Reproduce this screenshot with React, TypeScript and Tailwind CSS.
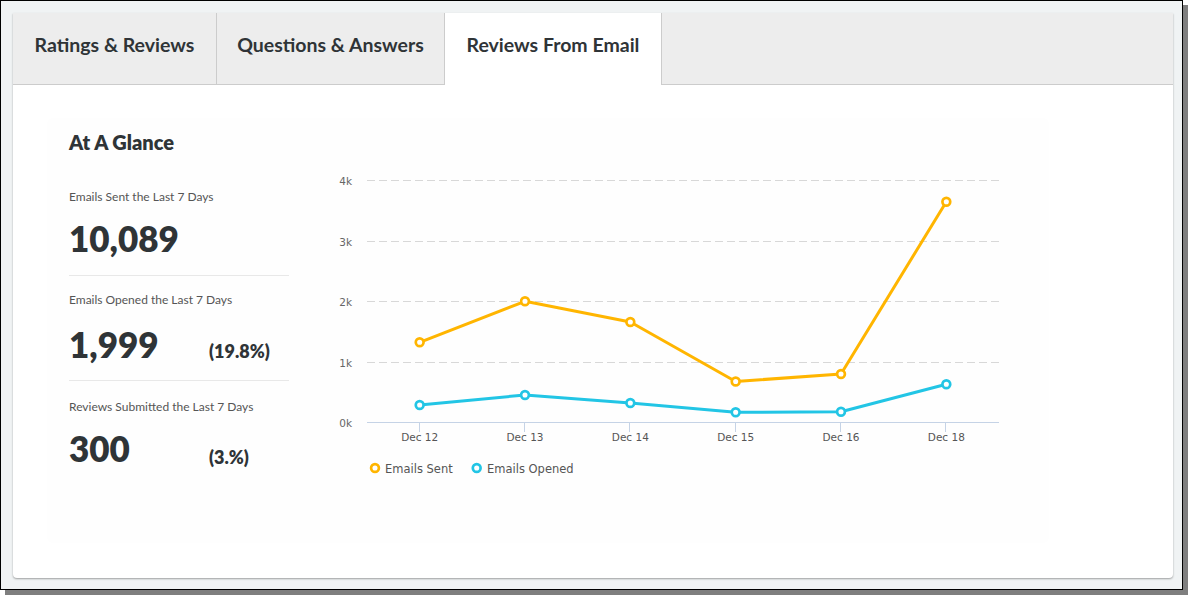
import React from "react";

const X0 = 37;
const STEP = 632 / 6;
const cats = ["Dec 12", "Dec 13", "Dec 14", "Dec 15", "Dec 16", "Dec 18"];
const sent = [177.3, 136.3, 157, 216.5, 209, 36.7];
const opened = [240, 230, 238, 247.3, 246.7, 219.3];
const cx = (i: number) => X0 + STEP / 2 + i * STEP;

function Chart() {
  const grid = [
    { y: 15.5, l: "4k" },
    { y: 76.5, l: "3k" },
    { y: 136.5, l: "2k" },
    { y: 197.5, l: "1k" },
  ];
  const pts = (arr: number[]) => arr.map((y, i) => `${cx(i)},${y}`).join(" ");
  const font = { fontFamily: '"DejaVu Sans", sans-serif' };
  return (
    <svg width="680" height="320" viewBox="0 0 680 320" style={font}>
      {grid.map((g) => (
        <g key={g.l}>
          <line x1={X0} x2={669} y1={g.y} y2={g.y} stroke="#d8d8d8" strokeWidth="1" strokeDasharray="8 4" />
          <text x={22} y={g.y + 4} textAnchor="end" fontSize="10.5" fill="#666">{g.l}</text>
        </g>
      ))}
      <text x={22} y={261.5} textAnchor="end" fontSize="10.5" fill="#666">0k</text>
      <line x1={X0} x2={669} y1={257.5} y2={257.5} stroke="#c5d3e6" strokeWidth="1" />
      {cats.map((c, i) => (
        <g key={c}>
          <line x1={Math.round(cx(i)) - 0.5} x2={Math.round(cx(i)) - 0.5} y1={257.5} y2={267} stroke="#c5d3e6" strokeWidth="1" />
          <text x={cx(i)} y={276} textAnchor="middle" fontSize="10.5" fill="#555">{c}</text>
        </g>
      ))}
      <polyline points={pts(sent)} fill="none" stroke="#ffb500" strokeWidth="3" strokeLinejoin="round" />
      <polyline points={pts(opened)} fill="none" stroke="#22c5e5" strokeWidth="3" strokeLinejoin="round" />
      {sent.map((y, i) => (
        <circle key={"s" + i} cx={cx(i)} cy={y} r="3.9" fill="#fff" stroke="#ffb500" strokeWidth="2.7" />
      ))}
      {opened.map((y, i) => (
        <circle key={"o" + i} cx={cx(i)} cy={y} r="3.9" fill="#fff" stroke="#22c5e5" strokeWidth="2.7" />
      ))}
      <circle cx={45} cy={303} r="3.9" fill="#fff" stroke="#ffb500" strokeWidth="2.7" />
      <text x={55} y={307.5} fontSize="11.5" fill="#555">Emails Sent</text>
      <circle cx={146.7} cy={303} r="3.9" fill="#fff" stroke="#22c5e5" strokeWidth="2.7" />
      <text x={157} y={307.5} fontSize="11.5" fill="#555">Emails Opened</text>
    </svg>
  );
}

export default function App() {
  const lato = { fontFamily: 'Lato, "Open Sans", sans-serif' };
  return (
    <div className="w-[1188px] h-[595px] bg-white">
      <div className="w-[1183px] h-[590px] border border-black bg-[#f0f3f4] shadow-[5px_5px_0_0_#7f7f7f] pl-[12px] pt-[12px]" style={lato}>
        <div className="w-[1160px] h-[565px] bg-white rounded-b-[4px] shadow-[0_1px_2px_rgba(0,0,0,0.35)] flex flex-col">
          <div className="flex h-[72px] shrink-0">
            <div className="w-[204px] h-full flex items-center justify-center pb-[8px] bg-[#ededed] border-r border-b border-[#cccccc] text-[19.5px] font-bold text-[#2f3437]">
              Ratings &amp; Reviews
            </div>
            <div className="w-[228px] h-full flex items-center justify-center pb-[8px] bg-[#ededed] border-r border-b border-[#cccccc] text-[19.5px] font-bold text-[#2f3437]">
              Questions &amp; Answers
            </div>
            <div className="w-[217px] h-full flex items-center justify-center pb-[9px] bg-white border-r border-[#cccccc] text-[19.5px] font-bold text-[#2f3437]">
              Reviews From Email
            </div>
            <div className="flex-1 h-full bg-[#ededed] border-b border-[#cccccc]" />
          </div>
          <div className="ml-[34px] mt-[33px] w-[1002px] h-[425px] bg-[#fefefe] rounded-[6px] pl-[22px] pt-[12px] flex items-start">
            <div className="w-[220px] flex flex-col text-[#2f3437]">
              <div className="text-[20px] leading-[24px] font-extrabold">At A Glance</div>
              <div className="mt-[35px] text-[12px] leading-[16px] text-[#555]">Emails Sent the Last 7 Days</div>
              <div className="mt-[13px] text-[35px] leading-[40px] font-extrabold">10,089</div>
              <div className="mt-[17px] h-px bg-[#e8e8e8]" />
              <div className="mt-[16px] text-[12px] leading-[16px] text-[#555]">Emails Opened the Last 7 Days</div>
              <div className="mt-[16px] flex items-baseline">
                <div className="w-[140px] text-[35px] leading-[40px] font-extrabold">1,999</div>
                <div className="text-[18px] font-extrabold">(19.8%)</div>
              </div>
              <div className="mt-[15px] h-px bg-[#e8e8e8]" />
              <div className="mt-[18px] text-[12px] leading-[16px] text-[#555]">Reviews Submitted the Last 7 Days</div>
              <div className="mt-[13px] flex items-baseline">
                <div className="w-[140px] text-[35px] leading-[40px] font-extrabold">300</div>
                <div className="text-[18px] font-extrabold relative top-[2px]">(3.%)</div>
              </div>
            </div>
            <div className="ml-[41px] mt-[35px]">
              <Chart />
            </div>
          </div>
        </div>
      </div>
    </div>
  );
}
